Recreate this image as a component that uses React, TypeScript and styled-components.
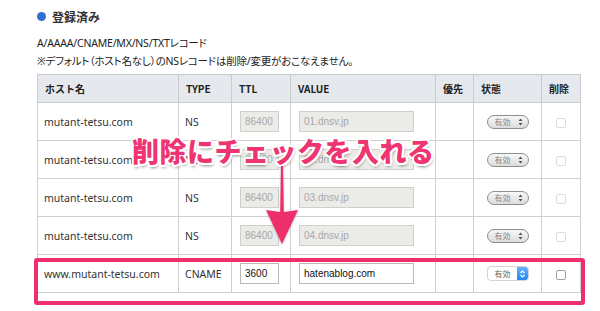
import React from "react";
import styled, { createGlobalStyle } from "styled-components";

const Global = createGlobalStyle`
  html, body { margin: 0; padding: 0; background: #fff; }
  body { font-family: "Noto Sans", "Noto Sans CJK JP", sans-serif; color: #333; }
`;

const Page = styled.div`
  position: relative;
  width: 600px;
  height: 311px;
  overflow: hidden;
  padding: 6px 20px 0 37px;
  box-sizing: border-box;
`;

const Title = styled.div`
  display: flex;
  align-items: center;
  gap: 6px;
  height: 20px;
  font-size: 12px;
  font-weight: 700;
  color: #333;
  font-family: "Noto Sans CJK JP", sans-serif;
`;

const Dot = styled.span`
  width: 9px;
  height: 9px;
  border-radius: 50%;
  background: #2f6fd0;
`;

const Desc = styled.div<{ $top: number }>`
  margin-top: ${(p) => p.$top}px;
  height: 18px;
  line-height: 18px;
  font-size: 10.5px;
  color: #222;
  font-family: "Noto Sans", "Noto Sans CJK JP", sans-serif;
  font-feature-settings: "palt";
  letter-spacing: -0.2px;
`;

const Table = styled.table`
  margin-top: 4px;
  border-collapse: collapse;
  width: 543px;
  table-layout: fixed;
  font-size: 11px;
`;

const Th = styled.th<{ $w: number }>`
  width: ${(p) => p.$w}px;
  height: 28px;
  background: #e5e8ed;
  border: 1px solid #c9cbce;
  text-align: left;
  padding: 0 0 0 7px;
  font-size: 10px;
  font-weight: 700;
  color: #222;
  font-family: "Noto Sans CJK JP", sans-serif;
  box-sizing: border-box;
`;

const Td = styled.td<{ $center?: boolean }>`
  height: 38px;
  border: 1px solid #cfcfcf;
  padding: 0 0 0 ${(p) => (p.$center ? 0 : 6)}px;
  text-align: ${(p) => (p.$center ? "center" : "left")};
  vertical-align: middle;
  color: #333;
  font-size: 10.5px;
  box-sizing: border-box;
`;

const Input = styled.div<{ $w: number; $off?: boolean }>`
  width: ${(p) => p.$w}px;
  height: 21px;
  box-sizing: border-box;
  border: 1px solid ${(p) => (p.$off ? "#cfcfcc" : "#b9b9b9")};
  background: ${(p) => (p.$off ? "#ebebe8" : "#fff")};
  color: ${(p) => (p.$off ? "#a8a8a8" : "#111")};
  font-size: 10px;
  line-height: 19px;
  padding: 0 0 0 4px;
  font-family: "Liberation Sans", sans-serif;
  margin-left: 2px;
`;

const SelectOff = styled.div`
  display: inline-flex;
  align-items: center;
  justify-content: space-between;
  width: 42px;
  height: 14px;
  box-sizing: border-box;
  border: 1px solid #8e8e8e;
  border-radius: 7px;
  background: linear-gradient(#f7f7f7, #dcdcdc);
  padding: 0 5px 0 7px;
  font-size: 8px;
  color: #888;
  font-family: "Noto Sans CJK JP", sans-serif;
`;

const SelectOn = styled.div`
  display: inline-flex;
  align-items: center;
  justify-content: space-between;
  width: 42px;
  height: 15px;
  box-sizing: border-box;
  border: 1px solid #d4d4d4;
  border-radius: 4px;
  background: #fff;
  padding: 0 0 0 7px;
  font-size: 8px;
  color: #666;
  font-family: "Noto Sans CJK JP", sans-serif;
  overflow: hidden;
`;

const Stepper = styled.span`
  width: 11px;
  height: 15px;
  margin-top: -1px;
  margin-bottom: -1px;
  border-radius: 0 4px 4px 0;
  background: linear-gradient(#6db7fb, #1b7ff5);
  display: flex;
  align-items: center;
  justify-content: center;
`;

const Check = styled.span<{ $off?: boolean }>`
  display: inline-block;
  width: 10px;
  height: 10px;
  box-sizing: border-box;
  border: 1px solid ${(p) => (p.$off ? "#dcdcdc" : "#a0a0a0")};
  border-radius: 2px;
  background: #fff;
  vertical-align: middle;
`;

const Highlight = styled.div`
  position: absolute;
  left: 34px;
  top: 258px;
  width: 551px;
  height: 47px;
  box-sizing: border-box;
  border: 4px solid #ef2f6c;
  border-radius: 3px;
  pointer-events: none;
`;

const Callout = styled.div`
  position: absolute;
  left: 132px;
  top: 131px;
  font-size: 27px;
  font-weight: 900;
  letter-spacing: 0.5px;
  color: #ee3471;
  font-family: "Noto Sans CJK JP", sans-serif;
  white-space: nowrap;
  text-shadow: 2px 0 0 #fff, -2px 0 0 #fff, 0 2px 0 #fff, 0 -2px 0 #fff,
    1.5px 1.5px 0 #fff, -1.5px -1.5px 0 #fff, 1.5px -1.5px 0 #fff,
    -1.5px 1.5px 0 #fff, 1px 3px 3px rgba(0, 0, 0, 0.45);
`;

const Arrow = styled.svg`
  position: absolute;
  left: 264px;
  top: 166px;
  filter: drop-shadow(0 1px 1px rgba(0, 0, 0, 0.25));
`;

const Updown = ({ color }: { color: string }) => (
  <svg width="5" height="8" viewBox="0 0 5 8">
    <path d="M0.5 3 L2.5 0.5 L4.5 3 Z M0.5 5 L2.5 7.5 L4.5 5 Z" fill={color} />
  </svg>
);

const Chevrons = () => (
  <svg width="7" height="10" viewBox="0 0 7 10">
    <path d="M1.5 4 L3.5 2 L5.5 4 M1.5 6 L3.5 8 L5.5 6" stroke="#fff" strokeWidth="1.2" fill="none" />
  </svg>
);

type Row = { host: string; type: string; ttl: string; value: string; off: boolean };

const rows: Row[] = [
  { host: "mutant-tetsu.com", type: "NS", ttl: "86400", value: "01.dnsv.jp", off: true },
  { host: "mutant-tetsu.com", type: "NS", ttl: "86400", value: "02.dnsv.jp", off: true },
  { host: "mutant-tetsu.com", type: "NS", ttl: "86400", value: "03.dnsv.jp", off: true },
  { host: "mutant-tetsu.com", type: "NS", ttl: "86400", value: "04.dnsv.jp", off: true },
  { host: "www.mutant-tetsu.com", type: "CNAME", ttl: "3600", value: "hatenablog.com", off: false },
];

const cols: [string, number][] = [
  ["ホスト名", 141],
  ["TYPE", 53],
  ["TTL", 59],
  ["VALUE", 145],
  ["優先", 38],
  ["状態", 68],
  ["削除", 39],
];

export default function App() {
  return (
    <>
      <Global />
      <Page>
        <Title>
          <Dot />
          登録済み
        </Title>
        <Desc $top={8}>A/AAAA/CNAME/MX/NS/TXTレコード</Desc>
        <Desc $top={0}>※デフォルト（ホスト名なし）のNSレコードは削除/変更がおこなえません。</Desc>
        <Table>
          <thead>
            <tr>
              {cols.map(([c, w]) => (
                <Th key={c} $w={w}>
                  {c}
                </Th>
              ))}
            </tr>
          </thead>
          <tbody>
            {rows.map((r, i) => (
              <tr key={i}>
                <Td>{r.host}</Td>
                <Td>{r.type}</Td>
                <Td>
                  <Input $w={39} $off={r.off}>
                    {r.ttl}
                  </Input>
                </Td>
                <Td>
                  <Input $w={115} $off={r.off}>
                    {r.value}
                  </Input>
                </Td>
                <Td />
                <Td $center>
                  {r.off ? (
                    <SelectOff>
                      有効
                      <Updown color="#555" />
                    </SelectOff>
                  ) : (
                    <SelectOn>
                      有効
                      <Stepper>
                        <Chevrons />
                      </Stepper>
                    </SelectOn>
                  )}
                </Td>
                <Td $center>
                  <Check $off={r.off} />
                </Td>
              </tr>
            ))}
          </tbody>
        </Table>
        <Highlight />
        <Callout>削除にチェックを入れる</Callout>
        <Arrow width="38" height="80" viewBox="0 0 38 80">
          <path
            d="M17 0 L19 0 L19.8 46 L34 44 L18 78 L2 44 L16.2 46 Z"
            fill="#ef2f6c"
          />
        </Arrow>
      </Page>
    </>
  );
}
